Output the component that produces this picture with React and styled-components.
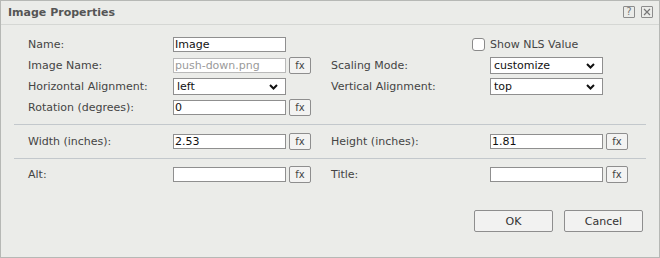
import React from 'react';
import styled, { createGlobalStyle } from 'styled-components';

const GlobalStyle = createGlobalStyle`
  html, body {
    margin: 0;
    padding: 0;
    background: #ffffff;
  }
  * {
    box-sizing: border-box;
  }
`;

const Dialog = styled.div`
  width: 660px;
  height: 258px;
  border: 1px solid #b6b8b5;
  background-color: #ebece9;
  font-family: 'DejaVu Sans', Verdana, sans-serif;
  font-size: 11px;
  color: #444;
  display: flex;
  flex-direction: column;
`;

const TitleBar = styled.div`
  height: 24px;
  border-bottom: 1px solid #d5d7d4;
  display: flex;
  align-items: center;
  justify-content: space-between;
  padding: 0 6px 1px 7px;
`;

const Title = styled.div`
  font-weight: bold;
  color: #555;
`;

const TitleTools = styled.div`
  display: flex;
  gap: 6px;
`;

const ToolBox = styled.div`
  width: 12px;
  height: 12px;
  border: 1px solid #8c8c8c;
  border-radius: 1px;
  display: flex;
  align-items: center;
  justify-content: center;
  color: #777;
  font-size: 10px;
  line-height: 1;
`;

const Section = styled.div`
  margin: 0 13px;
  padding: ${p => p.pad};
  border-bottom: ${p => (p.last ? 'none' : '1px solid #c3c8cc')};
  display: grid;
  grid-template-columns: 145px 158px 159px 1fr;
  grid-auto-rows: 21px;
  align-items: center;
  padding-left: 14px;
`;

const Label = styled.div`
  white-space: nowrap;
  color: #444;
`;

const Field = styled.div`
  display: flex;
  align-items: center;
  gap: 3px;
`;

const TextInput = styled.div`
  width: 113px;
  height: 15px;
  background: #fff;
  border: 1px solid ${p => (p.disabled ? '#b9b9b9' : '#8f8f8f')};
  color: ${p => (p.disabled ? '#9a9a9a' : '#111')};
  padding: 0 1px;
  line-height: 13px;
  white-space: nowrap;
  overflow: hidden;
`;

const FxButton = styled.div`
  width: 22px;
  height: 17px;
  border: 1px solid #8e8e8e;
  border-radius: 2px;
  background: #f3f3f2;
  display: flex;
  align-items: center;
  justify-content: center;
  font-size: 10px;
  color: #444;
  line-height: 1;
`;

const SelectBox = styled.div`
  width: 113px;
  height: 17px;
  background: #fff;
  border: 1px solid #8f8f8f;
  display: flex;
  align-items: center;
  justify-content: space-between;
  padding: 0 7px 0 3px;
  color: #111;
`;

const CheckRow = styled.label`
  grid-column: 3 / span 2;
  margin-left: 141px;
  display: flex;
  align-items: center;
  gap: 5px;
  color: #444;
`;

const CheckBox = styled.span`
  width: 13px;
  height: 13px;
  border: 1px solid #8a8a8a;
  border-radius: 3px;
  background: #fff;
`;

const Footer = styled.div`
  display: flex;
  justify-content: flex-end;
  gap: 11px;
  padding: 25px 16px 0 0;
`;

const Button = styled.div`
  width: 79px;
  height: 22px;
  border: 1px solid #8e8e8e;
  border-radius: 2px;
  background: #f2f2f1;
  display: flex;
  align-items: center;
  justify-content: center;
  color: #333;
`;

const Chevron = () => (
  <svg width="9" height="6" viewBox="0 0 9 6">
    <path d="M1 1 L4.5 4.5 L8 1" fill="none" stroke="#111" strokeWidth="2" />
  </svg>
);

const Input = ({ value, disabled, fx }) => (
  <Field>
    <TextInput disabled={disabled}>{value}</TextInput>
    {fx && <FxButton>fx</FxButton>}
  </Field>
);

const Select = ({ value }) => (
  <Field>
    <SelectBox>
      <span>{value}</span>
      <Chevron />
    </SelectBox>
  </Field>
);

export default function App() {
  return (
    <>
      <GlobalStyle />
      <Dialog>
        <TitleBar>
          <Title>Image Properties</Title>
          <TitleTools>
            <ToolBox>?</ToolBox>
            <ToolBox>
              <svg width="8" height="8" viewBox="0 0 8 8">
                <path d="M1 1 L7 7 M7 1 L1 7" stroke="#777" strokeWidth="1.2" />
              </svg>
            </ToolBox>
          </TitleTools>
        </TitleBar>

        <Section pad="9px 0 6px">
          <Label>Name:</Label>
          <Input value="Image" />
          <CheckRow>
            <CheckBox />
            Show NLS Value
          </CheckRow>

          <Label>Image Name:</Label>
          <Input value="push-down.png" disabled fx />
          <Label>Scaling Mode:</Label>
          <Select value="customize" />

          <Label>Horizontal Alignment:</Label>
          <Select value="left" />
          <Label>Vertical Alignment:</Label>
          <Select value="top" />

          <Label>Rotation (degrees):</Label>
          <Input value="0" fx />
        </Section>

        <Section pad="6px 0 6px">
          <Label>Width (inches):</Label>
          <Input value="2.53" fx />
          <Label>Height (inches):</Label>
          <Input value="1.81" fx />
        </Section>

        <Section pad="5px 0 0" last>
          <Label>Alt:</Label>
          <Input value="" fx />
          <Label>Title:</Label>
          <Input value="" fx />
        </Section>

        <Footer>
          <Button>OK</Button>
          <Button>Cancel</Button>
        </Footer>
      </Dialog>
    </>
  );
}
